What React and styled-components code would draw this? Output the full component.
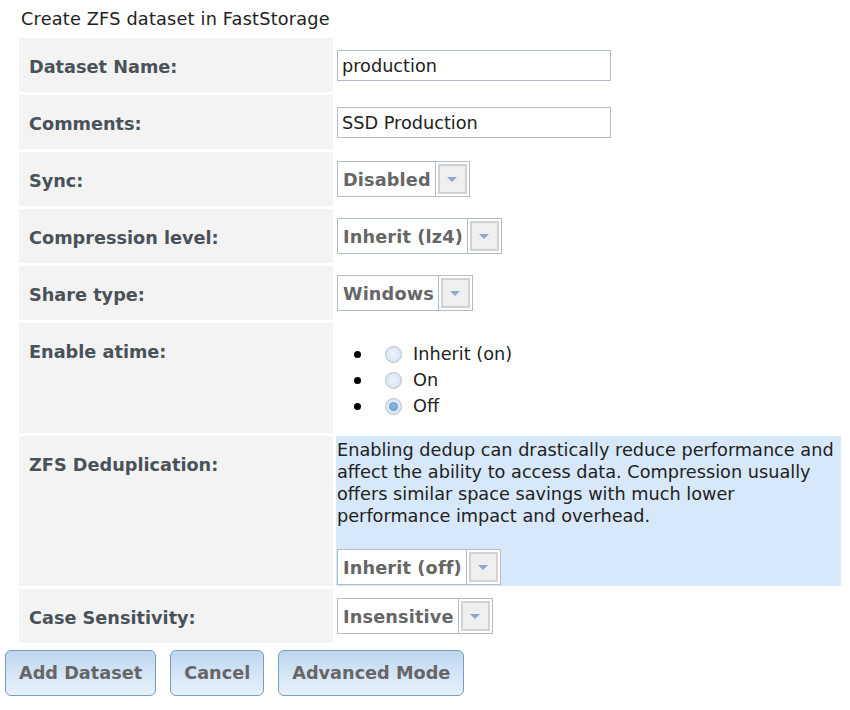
import { createGlobalStyle } from 'styled-components';
import styled from 'styled-components';

const GlobalStyle = createGlobalStyle`
  body {
    margin: 0;
    background: #ffffff;
    font-family: "DejaVu Sans", Verdana, sans-serif;
    font-size: 17.7px;
    color: #222;
  }
`;

const Page = styled.div`
  padding-top: 8px;
`;

const Title = styled.div`
  margin-left: 21px;
  line-height: 22px;
  color: #222;
  letter-spacing: 0.2px;
`;

const FormGrid = styled.div`
  display: grid;
  grid-template-columns: 314px 505px;
  gap: 3px;
  margin: 8px 0 0 19px;
`;

const Label = styled.div`
  background: #f3f3f3;
  min-height: ${(p) => p.$tall || 54}px;
  box-sizing: border-box;
  padding: 18px 10px 0;
  line-height: 22px;
  font-weight: bold;
  color: #4a5259;
`;

const Value = styled.div`
  display: flex;
  flex-direction: column;
  justify-content: center;
  align-items: flex-start;
  padding-left: 1px;
  background: ${(p) => (p.$note ? '#d7e8fb' : 'transparent')};
`;

const TextInput = styled.input`
  width: 274px;
  height: 31px;
  box-sizing: border-box;
  border: 1px solid #b3bccb;
  padding: 2px 4px 0;
  font: inherit;
  color: #222;
  outline: none;
`;

const Combo = styled.div`
  display: inline-flex;
  height: 36px;
  box-sizing: border-box;
  border: 1px solid #b3bccb;
  background: #fff;
`;

const ComboText = styled.span`
  padding: 2px 4px 0 5px;
  line-height: 32px;
  font-weight: bold;
  color: #666;
  border-right: 1px solid #b3bccb;
  letter-spacing: 0.15px;
`;

const ComboButton = styled.span`
  width: 33px;
  box-sizing: border-box;
  padding: 2px 2px;
  display: flex;
`;

const ComboArrow = styled.span`
  flex: 1;
  border: 2px solid #d2d2d2;
  background: #efefef;
  display: flex;
  align-items: center;
  justify-content: center;

  &::after {
    content: '';
    border-left: 5px solid transparent;
    border-right: 5px solid transparent;
    border-top: 5px solid #8ea7cd;
  }
`;

const RadioList = styled.ul`
  list-style: none;
  margin: 0;
  padding: 4px 0 0 17px;
`;

const RadioItem = styled.li`
  display: flex;
  align-items: center;
  height: 26px;

  &::before {
    content: '';
    width: 7px;
    height: 7px;
    border-radius: 50%;
    background: #000;
    margin-right: 24px;
  }
`;

const Radio = styled.span`
  width: 17px;
  height: 17px;
  box-sizing: border-box;
  border-radius: 50%;
  border: 1px solid #bcc0c6;
  background: radial-gradient(circle at 50% 45%, #eef5fb 0%, #d6e5f2 70%, #cfdbe7 100%);
  display: flex;
  align-items: center;
  justify-content: center;
  margin-right: 11px;

  &::after {
    content: '';
    width: 9px;
    height: 9px;
    border-radius: 50%;
    background: radial-gradient(circle at 50% 40%, #8fbbe3, #5f96c9);
    display: ${(p) => (p.$checked ? 'block' : 'none')};
  }
`;

const Note = styled.p`
  margin: 3px 0 22px;
  line-height: 22px;
  color: #222;
`;

const NoteBlock = styled.div`
  display: flex;
  flex-direction: column;
  align-items: flex-start;
  justify-content: flex-end;
  height: 100%;
  padding-bottom: 1px;
`;

const Buttons = styled.div`
  display: flex;
  gap: 14px;
  margin: 7px 0 0 5px;
`;

const Button = styled.button`
  height: 46px;
  padding: 0 13px 1px;
  border: 1.5px solid #789dbf;
  border-radius: 6px;
  background: linear-gradient(to bottom, #bed5ee 0%, #d6e6f7 55%, #e8f1fb 100%);
  font: inherit;
  font-weight: bold;
  color: #666;
  cursor: pointer;
`;

function Select({ value }) {
  return (
    <Combo>
      <ComboText>{value}</ComboText>
      <ComboButton>
        <ComboArrow />
      </ComboButton>
    </Combo>
  );
}

const atimeOptions = [
  { label: 'Inherit (on)', checked: false },
  { label: 'On', checked: false },
  { label: 'Off', checked: true },
];

export default function App() {
  return (
    <Page>
      <GlobalStyle />
      <Title>Create ZFS dataset in FastStorage</Title>
      <FormGrid>
        <Label>Dataset Name:</Label>
        <Value>
          <TextInput defaultValue="production" />
        </Value>

        <Label>Comments:</Label>
        <Value>
          <TextInput defaultValue="SSD Production" />
        </Value>

        <Label>Sync:</Label>
        <Value>
          <Select value="Disabled" />
        </Value>

        <Label>Compression level:</Label>
        <Value>
          <Select value="Inherit (lz4)" />
        </Value>

        <Label>Share type:</Label>
        <Value>
          <Select value="Windows" />
        </Value>

        <Label $tall={110}>Enable atime:</Label>
        <Value>
          <RadioList>
            {atimeOptions.map((o) => (
              <RadioItem key={o.label}>
                <Radio $checked={o.checked} />
                {o.label}
              </RadioItem>
            ))}
          </RadioList>
        </Value>

        <Label>ZFS Deduplication:</Label>
        <Value $note>
          <NoteBlock>
            <Note>
              Enabling dedup can drastically reduce performance and
              <br />
              affect the ability to access data. Compression usually
              <br />
              offers similar space savings with much lower
              <br />
              performance impact and overhead.
            </Note>
            <Select value="Inherit (off)" />
          </NoteBlock>
        </Value>

        <Label>Case Sensitivity:</Label>
        <Value>
          <Select value="Insensitive" />
        </Value>
      </FormGrid>
      <Buttons>
        <Button>Add Dataset</Button>
        <Button>Cancel</Button>
        <Button>Advanced Mode</Button>
      </Buttons>
    </Page>
  );
}
